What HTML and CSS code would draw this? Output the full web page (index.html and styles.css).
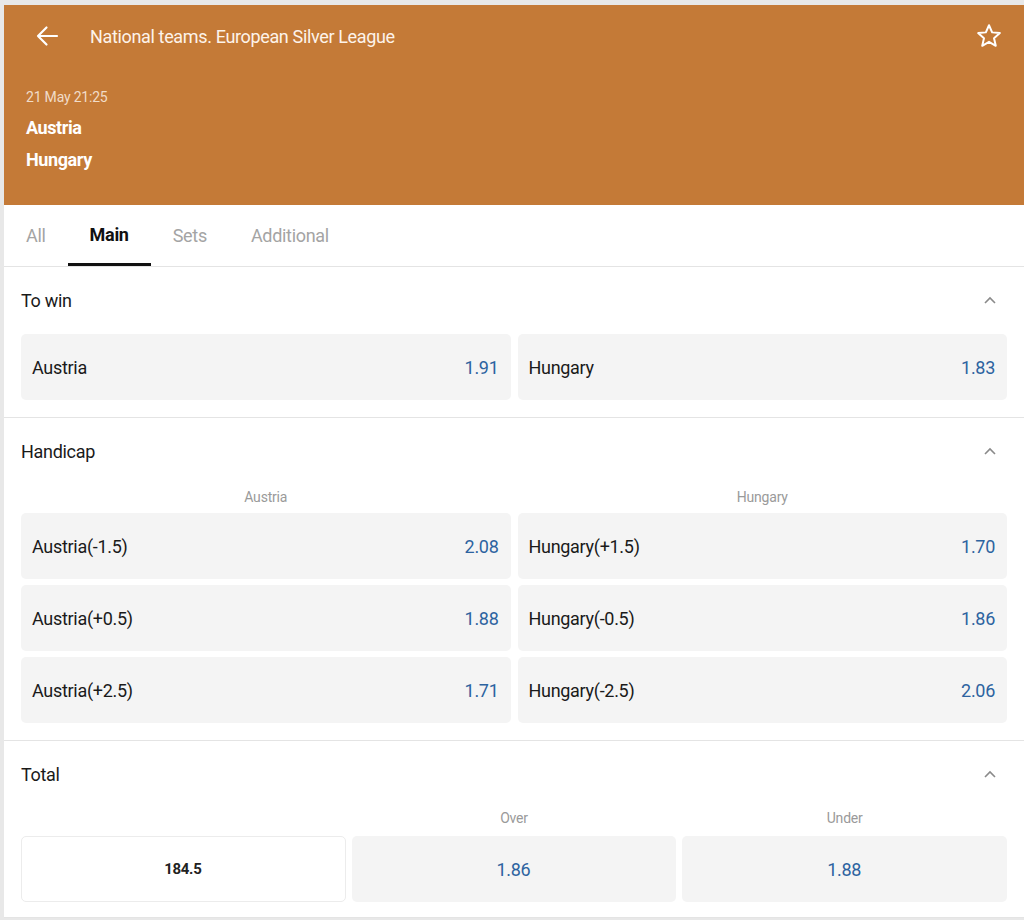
FILE: index.html
```html
<!DOCTYPE html>
<html>
<head>
<meta charset="utf-8">
<link rel="stylesheet" href="styles.css">
</head>
<body>
<div class="page">
  <header class="hero">
    <div class="topbar">
      <svg class="back" width="24" height="24" viewBox="0 0 24 24"><path d="M22 12H3M11.5 3.5L3 12l8.5 8.5" fill="none" stroke="#fff" stroke-width="2.2" stroke-linecap="round" stroke-linejoin="round"/></svg>
      <div class="league">National teams. European Silver League</div>
      <svg class="star" width="28" height="28" viewBox="0 0 24 24"><path d="M12 2.8l2.7 6.1 6.6.6-5 4.4 1.5 6.5L12 17l-5.8 3.4 1.5-6.5-5-4.4 6.6-.6z" fill="none" stroke="#fff" stroke-width="1.7" stroke-linejoin="round"/></svg>
    </div>
    <div class="match">
      <div class="date">21 May 21:25</div>
      <div class="team">Austria</div>
      <div class="team">Hungary</div>
    </div>
  </header>

  <nav class="tabs">
    <div class="tab">All</div>
    <div class="tab active">Main</div>
    <div class="tab">Sets</div>
    <div class="tab">Additional</div>
  </nav>

  <section class="market">
    <div class="market-head"><span>To win</span><svg class="chev" width="14" height="10" viewBox="0 0 14 10"><path d="M2 7l5-5 5 5" fill="none" stroke="#8a8a8a" stroke-width="1.6"/></svg></div>
    <div class="grid2">
      <div class="cell"><span>Austria</span><span class="odd">1.91</span></div>
      <div class="cell"><span>Hungary</span><span class="odd">1.83</span></div>
    </div>
  </section>

  <section class="market">
    <div class="market-head"><span>Handicap</span><svg class="chev" width="14" height="10" viewBox="0 0 14 10"><path d="M2 7l5-5 5 5" fill="none" stroke="#8a8a8a" stroke-width="1.6"/></svg></div>
    <div class="grid2 labels">
      <div class="col-label">Austria</div>
      <div class="col-label">Hungary</div>
    </div>
    <div class="grid2 rows">
      <div class="cell"><span>Austria(-1.5)</span><span class="odd">2.08</span></div>
      <div class="cell"><span>Hungary(+1.5)</span><span class="odd">1.70</span></div>
      <div class="cell"><span>Austria(+0.5)</span><span class="odd">1.88</span></div>
      <div class="cell"><span>Hungary(-0.5)</span><span class="odd">1.86</span></div>
      <div class="cell"><span>Austria(+2.5)</span><span class="odd">1.71</span></div>
      <div class="cell"><span>Hungary(-2.5)</span><span class="odd">2.06</span></div>
    </div>
  </section>

  <section class="market last">
    <div class="market-head"><span>Total</span><svg class="chev" width="14" height="10" viewBox="0 0 14 10"><path d="M2 7l5-5 5 5" fill="none" stroke="#8a8a8a" stroke-width="1.6"/></svg></div>
    <div class="grid3 labels">
      <div class="col-label"></div>
      <div class="col-label">Over</div>
      <div class="col-label">Under</div>
    </div>
    <div class="grid3">
      <div class="cell line">184.5</div>
      <div class="cell center"><span class="odd">1.86</span></div>
      <div class="cell center"><span class="odd">1.88</span></div>
    </div>
  </section>
</div>
</body>
</html>
```

FILE: styles.css
```css
* { box-sizing: border-box; }
html, body { margin: 0; padding: 0; }
body {
  background: #e8e8e8;
  font-family: Roboto, "Liberation Sans", sans-serif;
  color: #1a1a1a;
  height: 920px;
  overflow: hidden;
}
.page {
  margin: 5px 0 0 4px;
  background: #fff;
}
.hero {
  background: #c47a37;
  height: 200px;
  color: #fff;
}
.topbar {
  display: flex;
  align-items: center;
  height: 62px;
  padding: 0 21px 0 31px;
}
.back { flex: none; }
.league {
  flex: 1;
  margin-left: 31px;
  font-size: 18px;
  letter-spacing: -0.35px;
  color: #fdf3ea;
}
.star { flex: none; }
.match {
  padding: 20px 22px 0;
}
.date {
  font-size: 14px;
  color: #f1dcc8;
  letter-spacing: -0.2px;
  line-height: 20px;
}
.team {
  font-size: 18px;
  font-weight: 700;
  line-height: 32px;
  letter-spacing: -0.4px;
}
.date + .team { margin-top: 5px; }

.tabs {
  display: flex;
  height: 62px;
  border-bottom: 1px solid #e4e4e4;
}
.tab {
  height: 61px;
  padding: 22px 22px 0;
  font-size: 18px;
  line-height: 18px;
  color: #a4a4a4;
  letter-spacing: -0.3px;
  border-bottom: 3px solid transparent;
}
.tab.active {
  padding-top: 21px;
  color: #111;
  font-weight: 700;
  border-bottom-color: #111;
}

.market {
  padding: 0 17px 17px;
  border-bottom: 1px solid #e4e4e4;
}
.market.last { padding-bottom: 15px; }
.market-head {
  display: flex;
  justify-content: space-between;
  align-items: center;
  height: 67px;
  font-size: 18px;
  letter-spacing: -0.3px;
}
.chev { margin-right: 10px; }
.grid2 {
  display: grid;
  grid-template-columns: 1fr 1fr;
  gap: 6px 7px;
}
.grid3 {
  display: grid;
  grid-template-columns: 1fr 1fr 1fr;
  gap: 6px;
}
.grid2.labels { height: 28px; gap: 0 7px; }
.grid3.labels { height: 28px; gap: 0 6px; }
.col-label {
  text-align: center;
  font-size: 14px;
  color: #9a9a9a;
  line-height: 18px;
  padding-top: 3px;
  letter-spacing: -0.2px;
}
.grid3 .col-label { padding-top: 1px; }
.cell {
  display: flex;
  justify-content: space-between;
  align-items: center;
  height: 66px;
  padding: 0 12px 0 11px;
  background: #f4f4f4;
  border-radius: 5px;
  font-size: 18px;
  letter-spacing: -0.3px;
}
.odd { color: #2d63a0; }
.cell.center { justify-content: center; }
.cell.line {
  justify-content: center;
  background: #fff;
  border: 1px solid #ececec;
  font-size: 15px;
  font-weight: 700;
  color: #222;
}
```
